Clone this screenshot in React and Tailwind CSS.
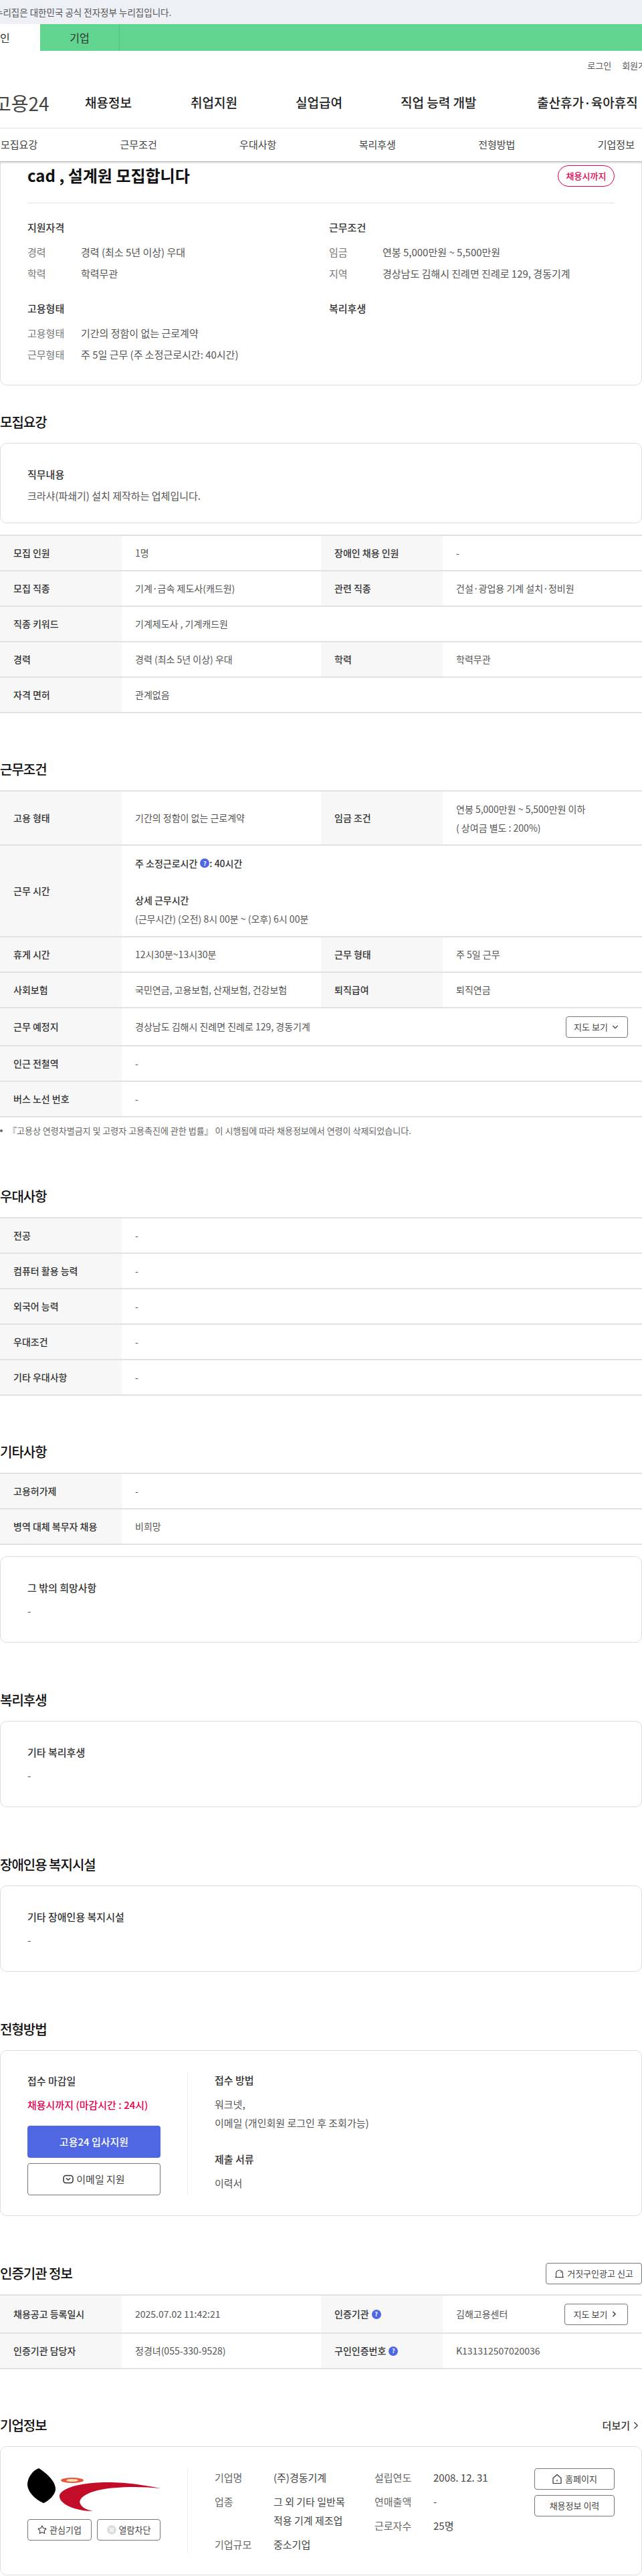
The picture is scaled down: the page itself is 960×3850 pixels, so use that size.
import React from 'react';
import { ChevronDown, ChevronRight, Star, X } from 'lucide-react';

const font = { fontFamily: '"Noto Sans CJK KR", "Noto Sans", sans-serif' };

const HelpBadge = () => (
    <span className="inline-flex w-[14px] h-[14px] rounded-full bg-[#4f67e3] text-white text-[9px] font-bold items-center justify-center leading-none">?</span>
);

const MailIcon = () => (
    <svg width="16" height="14" viewBox="0 0 16 14" fill="none" stroke="#333" strokeWidth="1.5">
        <rect x="1" y="1.5" width="14" height="11" rx="3.5" />
        <path d="M4.8 5.5 8 8l3.2-2.5" />
    </svg>
);

const HouseIcon = () => (
    <svg width="16" height="16" viewBox="0 0 16 16" fill="none" stroke="#333" strokeWidth="1.2">
        <path d="M2 14.5V6.8L8 1.5l6 5.3v7.7z" strokeLinejoin="round" />
        <path d="M8 9v2.5" />
    </svg>
);

const BellIcon = () => (
    <svg width="15" height="14" viewBox="0 0 15 14" fill="none" stroke="#333" strokeWidth="1.1">
        <path d="M2.5 12.5V7a5 5 0 0 1 10 0v5.5" />
        <path d="M1 12.5h13M9.5 4l1 1.5" />
    </svg>
);

const Logo = () => (
    <svg width="199" height="64" viewBox="0 0 199 64">
        <path d="M17 0C30 8 42 20 42 31 42 40 30 50 24 52 10 46 0 34 0 24 0 14 8 3 17 0z" fill="#000" />
        <ellipse cx="67" cy="18" rx="17" ry="4" fill="#e8553f" />
        <ellipse cx="67" cy="18" rx="9" ry="2" fill="#fde0b8" />
        <path d="M49 38C58 26 90 21 120 21 150 21 180 26 199 30 170 27 130 27 105 33 85 38 76 46 79 53 81 58 88 62 98 64 78 64 58 58 50 48 48 44 47 41 49 38z" fill="#c30d28" />
    </svg>
);

const Heading = ({ children, right }) => (
    <div className="flex justify-between items-start h-8 mb-[15px]">
        <h2 className="text-[20px] leading-8 font-medium text-[#111] tracking-[-1px]">{children}</h2>
        {right}
    </div>
);

const Card = ({ title, children, className = '' }) => (
    <div className={`border border-[#ddd] rounded-[10px] px-10 ${className}`}>
        <div className="text-[15px] leading-6 font-medium text-[#333]">{title}</div>
        <div className="mt-[11px] text-[15px] leading-6 text-[#555]">{children}</div>
    </div>
);

const Cell = ({ children, className = '' }) => (
    <div className={`px-5 flex items-center text-[14px] text-[#555] ${className}`}>{children}</div>
);

const Label = ({ children }) => (
    <div className="w-[182px] shrink-0 bg-[#f7f7f7] pl-5 flex items-center gap-1 text-[14px] font-medium text-[#333]">{children}</div>
);

const Row = ({ label, value, label2, value2, h = 'h-[53px]' }) => (
    <div className={`flex border-b-2 border-[#e2e2e2] ${h}`}>
        <Label>{label}</Label>
        <Cell className={label2 ? 'w-[298px]' : 'flex-1'}>{value}</Cell>
        {label2 && <Label>{label2}</Label>}
        {label2 && <Cell className="flex-1">{value2}</Cell>}
    </div>
);

const Table = ({ children }) => <div className="border-t-2 border-[#e2e2e2] -mb-[2px]">{children}</div>;

const Section = ({ title, right, children }) => (
    <section className="mt-[70px]">
        <Heading right={right}>{title}</Heading>
        {children}
    </section>
);

const SummaryTitle = ({ children }) => (
    <div className="text-[15px] font-medium leading-8 text-[#333] mb-[5px]">{children}</div>
);

const SummaryRow = ({ label, value }) => (
    <div className="flex h-8 items-center text-[15px]">
        <span className="w-20 text-[#777]">{label}</span>
        <span className="text-[#555]">{value}</span>
    </div>
);

const OutlineBtn = ({ children, className = '' }) => (
    <button className={`h-8 border border-[#777] rounded-[4px] flex items-center justify-center gap-1 text-[13px] text-[#444] ${className}`}>{children}</button>
);

const InfoRow = ({ label, children, w = 'w-[88px]' }) => (
    <div className="flex text-[15px] leading-7">
        <span className={`${w} shrink-0 text-[#666]`}>{label}</span>
        <span className="text-[#444]">{children}</span>
    </div>
);

export default function App() {
    return (
        <div className="w-[960px] h-[3850px] overflow-hidden bg-white" style={font}>
            <div className="h-9 bg-[#edf0f5] flex items-center text-[13.5px] text-[#555]">
                <span className="-ml-2 whitespace-nowrap">누리집은 대한민국 공식 전자정부 누리집입니다.</span>
            </div>
            <div className="h-10 bg-[#61d590] flex text-[16px] text-[#333]">
                <div className="w-[60px] bg-white flex items-center">
                    <span>인</span>
                </div>
                <div className="w-[119px] border-r border-[#55c682] flex items-center justify-center">기업</div>
            </div>
            <div className="h-[116px] border-b border-[#e5e5e5] relative">
                <div className="flex justify-end gap-4 pt-3 text-[13px] text-[#555] -mr-[18px]">
                    <span>로그인</span><span>회원가입</span>
                </div>
                <div className="flex items-center mt-[25px] text-[19px] font-medium text-[#222]">
                    <span className="-ml-[9px] w-[136px] text-[28px] font-normal text-[#444]">고용24</span>
                    <span className="w-[158px]">채용정보</span>
                    <span className="w-[157px]">취업지원</span>
                    <span className="w-[157px]">실업급여</span>
                    <span className="w-[204px]">직업 능력 개발</span>
                    <span>출산휴가·육아휴직</span>
                </div>
            </div>
            <div className="h-[49px] flex items-center justify-between pl-px pr-[11px] text-[15px] text-[#444] shadow-[0_2px_3px_rgba(0,0,0,0.2)] relative z-10 bg-white">
                <span>모집요강</span><span>근무조건</span><span>우대사항</span><span>복리후생</span><span>전형방법</span><span>기업정보</span>
            </div>

            <div className="h-[335px] border border-[#ddd] rounded-b-[10px] px-10 relative">
                <div className="flex justify-between items-center h-[62px] border-b border-[#e5e5e5]">
                    <h1 className="text-[24px] font-semibold text-[#111] -mt-[22px]">cad , 설계원 모집합니다</h1>
                    <span className="w-[85px] h-8 rounded-full border border-[#e6004d] text-[#e6004d] text-[13px] font-medium flex items-center justify-center -mt-5">채용시까지</span>
                </div>
                <div className="grid grid-cols-[451px_1fr] mt-5">
                    <div>
                        <SummaryTitle>지원자격</SummaryTitle>
                        <SummaryRow label="경력" value="경력 (최소 5년 이상) 우대" />
                        <SummaryRow label="학력" value="학력무관" />
                    </div>
                    <div>
                        <SummaryTitle>근무조건</SummaryTitle>
                        <SummaryRow label="임금" value="연봉 5,000만원 ~ 5,500만원" />
                        <SummaryRow label="지역" value="경상남도 김해시 진례면 진례로 129, 경동기계" />
                    </div>
                    <div className="mt-5">
                        <SummaryTitle>고용형태</SummaryTitle>
                        <SummaryRow label="고용형태" value="기간의 정함이 없는 근로계약" />
                        <SummaryRow label="근무형태" value="주 5일 근무 (주 소정근로시간: 40시간)" />
                    </div>
                    <div className="mt-5">
                        <SummaryTitle>복리후생</SummaryTitle>
                    </div>
                </div>
            </div>

            <section className="mt-[39px]">
                <Heading>모집요강</Heading>
                <div className="h-[120px] border border-[#ddd] rounded-[10px] px-10 pt-[34px]">
                    <div className="text-[15px] leading-6 font-medium text-[#333]">직무내용</div>
                    <div className="mt-2 text-[15px] leading-6 text-[#555]">크라샤(파쇄기) 설치 제작하는 업체입니다.</div>
                </div>
                <div className="mt-[17px]">
                    <Table>
                        <Row label="모집 인원" value="1명" label2="장애인 채용 인원" value2="-" />
                        <Row label="모집 직종" value="기계·금속 제도사(캐드원)" label2="관련 직종" value2="건설·광업용 기계 설치·정비원" />
                        <Row label="직종 키워드" value="기계제도사 , 기계캐드원" />
                        <Row label="경력" value="경력 (최소 5년 이상) 우대" label2="학력" value2="학력무관" />
                        <Row label="자격 면허" value="관계없음" />
                    </Table>
                </div>
            </section>

            <Section title="근무조건">
                <Table>
                    <Row h="h-[81px]" label="고용 형태" value="기간의 정함이 없는 근로계약" label2="임금 조건"
                        value2={<div className="leading-7">연봉 5,000만원 ~ 5,500만원 이하<br />( 상여금 별도 : 200%)</div>} />
                    <Row h="h-[137px]" label="근무 시간" value={
                        <div className="leading-7">
                            <div className="flex items-center gap-1 font-medium text-[#333]">주 소정근로시간 <HelpBadge /><span className="-ml-1">: 40시간</span></div>
                            <div className="mt-[27px] font-medium text-[#333]">상세 근무시간</div>
                            <div>(근무시간) (오전) 8시 00분 ~ (오후) 6시 00분</div>
                        </div>
                    } />
                    <Row label="휴게 시간" value="12시30분~13시30분" label2="근무 형태" value2="주 5일 근무" />
                    <Row label="사회보험" value="국민연금, 고용보험, 산재보험, 건강보험" label2="퇴직급여" value2="퇴직연금" />
                    <Row h="h-[57px]" label="근무 예정지" value={
                        <div className="flex items-center justify-between w-[737px]">
                            <span>경상남도 김해시 진례면 진례로 129, 경동기계</span>
                            <OutlineBtn className="w-[93px]">지도 보기 <ChevronDown size={14} /></OutlineBtn>
                        </div>
                    } />
                    <Row label="인근 전철역" value="-" />
                    <Row label="버스 노선 번호" value="-" />
                </Table>
                <div className="mt-[10px] text-[13px] leading-6 text-[#666] flex items-center gap-2">
                    <span className="w-1 h-1 rounded-full bg-[#666]" />
                    <span>『고용상 연령차별금지 및 고령자 고용촉진에 관한 법률』 이 시행됨에 따라 채용정보에서 연령이 삭제되었습니다.</span>
                </div>
            </Section>

            <Section title="우대사항">
                <Table>
                    <Row label="전공" value="-" />
                    <Row label="컴퓨터 활용 능력" value="-" />
                    <Row label="외국어 능력" value="-" />
                    <Row label="우대조건" value="-" />
                    <Row label="기타 우대사항" value="-" />
                </Table>
            </Section>

            <Section title="기타사항">
                <Table>
                    <Row label="고용허가제" value="-" />
                    <Row label="병역 대체 복무자 채용" value="비희망" />
                </Table>
                <Card title="그 밖의 희망사항" className="mt-[19px] h-[129px] pt-[34px]">-</Card>
            </Section>

            <Section title="복리후생">
                <Card title="기타 복리후생" className="h-[129px] pt-[34px]">-</Card>
            </Section>

            <Section title="장애인용 복지시설">
                <Card title="기타 장애인용 복지시설" className="h-[129px] pt-[34px]">-</Card>
            </Section>

            <Section title="전형방법">
                <div className="h-[248px] border border-[#ddd] rounded-[10px] px-10 pt-8 flex">
                    <div className="w-[240px] pr-10 border-r border-[#eee] box-border h-[184px]">
                        <div className="text-[15px] leading-6 font-medium text-[#333] mt-[1px]">접수 마감일</div>
                        <div className="mt-3 text-[15px] leading-6 font-medium text-[#e6004d]">채용시까지 (마감시간 : 24시)</div>
                        <button className="mt-[19px] w-[199px] h-12 rounded-[4px] bg-[#4f67e3] text-white text-[15px] font-medium">고용24 입사지원</button>
                        <button className="mt-2 w-[199px] h-12 rounded-[4px] border border-[#777] text-[#444] text-[15px] flex items-center justify-center gap-1"><MailIcon />이메일 지원</button>
                    </div>
                    <div className="pl-10 text-[15px] leading-7 text-[#555]">
                        <div className="font-medium text-[#333] leading-6">접수 방법</div>
                        <div className="mt-[10px]">워크넷,</div>
                        <div>이메일 (개인회원 로그인 후 조회가능)</div>
                        <div className="mt-[26px] font-medium text-[#333]">제출 서류</div>
                        <div className="mt-2">이력서</div>
                    </div>
                </div>
            </Section>

            <Section title="인증기관 정보" right={
                <OutlineBtn className="w-[144px]"><BellIcon />거짓구인광고 신고</OutlineBtn>
            }>
                <Table>
                    <Row h="h-[57px]" label="채용공고 등록일시" value="2025.07.02 11:42:21" label2={<>인증기관 <HelpBadge /></>}
                        value2={<div className="flex items-center justify-between w-[257px]"><span>김해고용센터</span><OutlineBtn className="w-[95px]">지도 보기 <ChevronRight size={13} strokeWidth={3} /></OutlineBtn></div>} />
                    <Row label="인증기관 담당자" value="정경녀(055-330-9528)" label2={<>구인인증번호 <HelpBadge /></>} value2="K131312507020036" />
                </Table>
            </Section>

            <section className="mt-[70px]">
                <Heading right={<span className="flex items-center text-[15px] font-medium leading-8 text-[#333]">더보기 <ChevronRight size={18} strokeWidth={1.5} /></span>}>기업정보</Heading>
                <div className="h-[193px] border border-[#ddd] rounded-[10px] px-10 pt-8 flex">
                    <div className="w-[240px] h-[128px] pr-10 border-r border-[#eee] box-border">
                        <Logo />
                        <div className="flex gap-2 mt-3">
                            <OutlineBtn className="w-[96px]"><Star size={14} />관심기업</OutlineBtn>
                            <OutlineBtn className="w-[95px]">
                                <span className="w-[14px] h-[14px] rounded-full bg-[#ddd] flex items-center justify-center"><X size={10} color="#fff" strokeWidth={3} /></span>
                                열람차단
                            </OutlineBtn>
                        </div>
                    </div>
                    <div className="pl-10 w-[279px]">
                        <InfoRow label="기업명">(주)경동기계</InfoRow>
                        <div className="mt-2"><InfoRow label="업종">그 외 기타 일반목<br />적용 기계 제조업</InfoRow></div>
                        <div className="mt-2"><InfoRow label="기업규모">중소기업</InfoRow></div>
                    </div>
                    <div className="w-[239px]">
                        <InfoRow label="설립연도">2008. 12. 31</InfoRow>
                        <div className="mt-2"><InfoRow label="연매출액">-</InfoRow></div>
                        <div className="mt-2"><InfoRow label="근로자수">25명</InfoRow></div>
                    </div>
                    <div className="w-[120px]">
                        <OutlineBtn className="w-full"><HouseIcon />홈페이지</OutlineBtn>
                        <OutlineBtn className="w-full mt-2">채용정보 이력</OutlineBtn>
                    </div>
                </div>
            </section>
        </div>
    );
}
